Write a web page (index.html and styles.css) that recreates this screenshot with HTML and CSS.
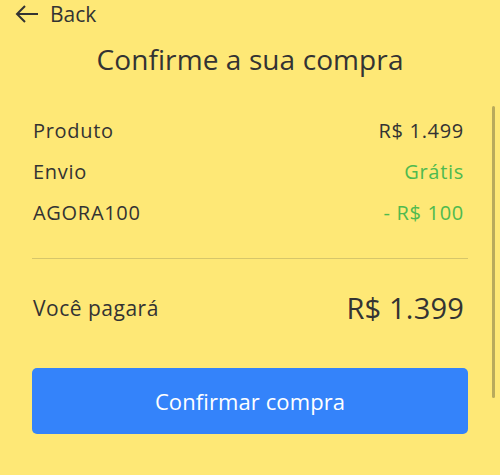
FILE: index.html
```html
<!DOCTYPE html>
<html lang="pt-BR">
<head>
    <meta charset="UTF-8">
    <meta name="viewport" content="width=device-width, initial-scale=1.0">
    <title>Confirme a sua compra</title>
    <link rel="stylesheet" href="styles.css">
</head>
<body>
    <div class="page">
        <a href="#" class="back">
            <svg class="back-icon" width="24" height="18" viewBox="0 0 24 18">
                <path d="M23 9H2M10 1L2 9l8 8" fill="none" stroke="#333" stroke-width="2"/>
            </svg>
            <span>Back</span>
        </a>

        <h1 class="title">Confirme a sua compra</h1>

        <div class="summary">
            <div class="row">
                <span>Produto</span>
                <span>R$ 1.499</span>
            </div>
            <div class="row">
                <span>Envio</span>
                <span class="green">Grátis</span>
            </div>
            <div class="row">
                <span>AGORA100</span>
                <span class="green">- R$ 100</span>
            </div>
        </div>

        <div class="total">
            <span class="total-label">Você pagará</span>
            <span class="total-price">R$ 1.399</span>
        </div>

        <button class="confirm">Confirmar compra</button>
    </div>

    <div class="scrollbar"></div>
</body>
</html>
```

FILE: styles.css
```css
body {
    margin: 0;
    background-color: #fee876;
    font-family: "Open Sans", "Liberation Sans", sans-serif;
    color: #333;
}

.page {
    padding: 0 32px;
}

.back {
    display: flex;
    align-items: center;
    gap: 11px;
    height: 28px;
    margin-left: -17px;
    font-size: 21px;
    color: #333;
    text-decoration: none;
}

.back-icon {
    display: block;
}

.title {
    margin: 13px 0 0;
    font-size: 28px;
    font-weight: 400;
    line-height: 36px;
    letter-spacing: 0.1px;
    text-align: center;
}

.summary {
    margin-top: 33px;
    padding: 0 4px 25px 1px;
    border-bottom: 1px solid #d6c66a;
}

.row {
    display: flex;
    justify-content: space-between;
    font-size: 20px;
    line-height: 41px;
    letter-spacing: 0.7px;
}

.green {
    color: #4fba4f;
}

.total {
    display: flex;
    justify-content: space-between;
    align-items: center;
    height: 97px;
    padding: 0 4px 0 1px;
}

.total-label {
    font-size: 21px;
    letter-spacing: 0.5px;
}

.total-price {
    font-size: 29px;
    letter-spacing: 0.2px;
}

.confirm {
    display: block;
    width: 100%;
    height: 66px;
    margin-top: 12px;
    border: none;
    border-radius: 5px;
    background-color: #3483fa;
    color: #fff;
    font-family: inherit;
    font-size: 22px;
    letter-spacing: 0.1px;
    cursor: pointer;
}

.scrollbar {
    position: fixed;
    top: 106px;
    right: 5px;
    width: 3px;
    height: 292px;
    border-radius: 2px;
    background-color: #b9aa5c;
}
```
